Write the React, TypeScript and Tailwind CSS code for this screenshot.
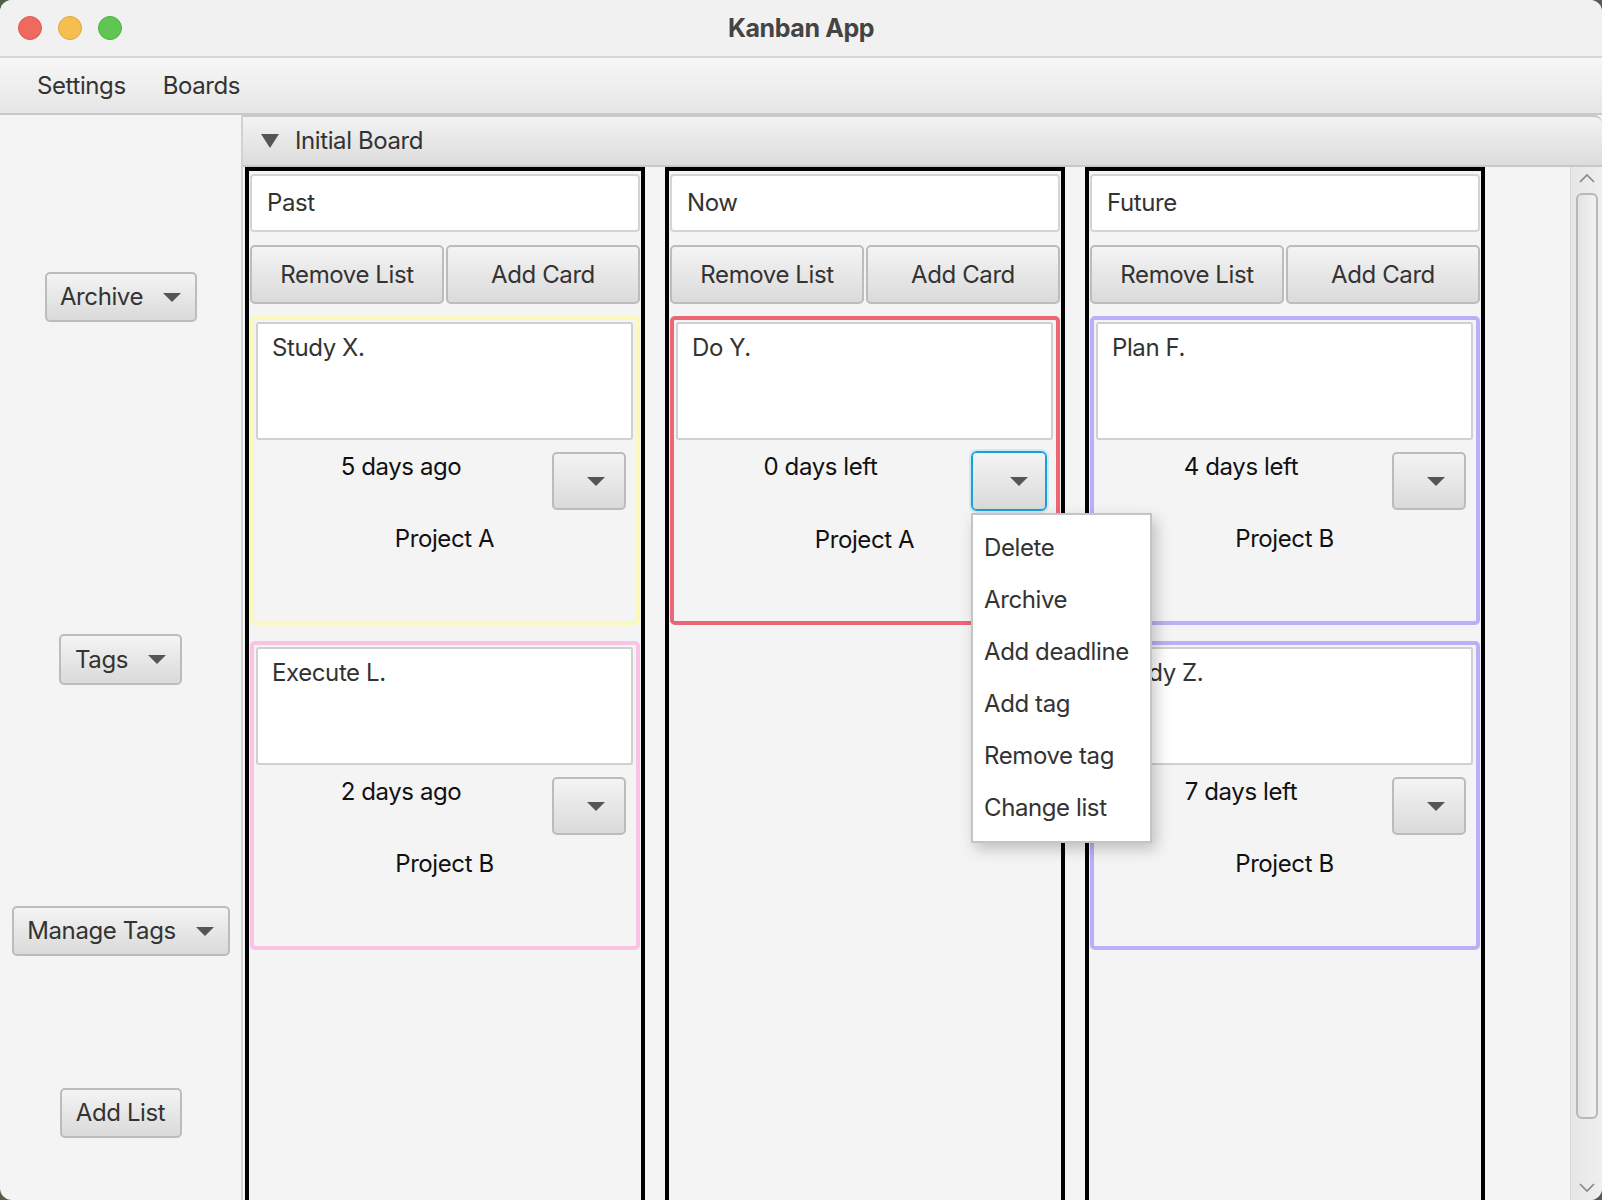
import React from "react";

const font = { fontFamily: "Inter, 'Noto Sans', sans-serif", letterSpacing: "-0.4px" };

function Caret({ className = "" }: { className?: string }) {
  return (
    <svg className={className} width="18" height="9" viewBox="0 0 18 9">
      <polygon points="0,0 18,0 9,9" fill="#555" />
    </svg>
  );
}

function Btn({ children, className = "" }: { children: React.ReactNode; className?: string }) {
  return (
    <div
      className={`flex items-center justify-center rounded-[5px] border-2 border-[#bcbcbc] bg-linear-to-b from-[#f4f4f4] to-[#dadada] text-[24px] text-[#333] ${className}`}
    >
      {children}
    </div>
  );
}

type Card = {
  title: string;
  when: string;
  project: string;
  border: string;
  focused?: boolean;
};

type List = { name: string; cards: Card[] };

const lists: List[] = [
  {
    name: "Past",
    cards: [
      { title: "Study X.", when: "5 days ago", project: "Project A", border: "border-[#fbf9b9]" },
      { title: "Execute L.", when: "2 days ago", project: "Project B", border: "border-[#f9c3e6]" },
    ],
  },
  {
    name: "Now",
    cards: [{ title: "Do Y.", when: "0 days left", project: "Project A", border: "border-[#ec6775]", focused: true }],
  },
  {
    name: "Future",
    cards: [
      { title: "Plan F.", when: "4 days left", project: "Project B", border: "border-[#bbaff6]" },
      { title: "Study Z.", when: "7 days left", project: "Project B", border: "border-[#bbaff6]" },
    ],
  },
];

function CardView({ card }: { card: Card }) {
  return (
    <div className={`h-[309px] rounded-[5px] border-4 ${card.border} p-[2px] pr-[3px]`}>
      <div className="h-[118px] rounded-[3px] border-2 border-[#d0d0d0] bg-white px-[14px] pt-[6px] text-[24px] text-[#333]">
        {card.title}
      </div>
      <div className="mt-[12px] flex items-start pr-[7px]">
        <div className="flex-1 pr-[6px] text-center text-[24px] leading-[30px] text-[#111]">{card.when}</div>
        {card.focused ? (
          <div className="-mr-[1px] -mt-[1px] rounded-[6px] border-2 border-[#1b9fd9] shadow-[0_0_0_2px_#cde8f6]">
            <div className="flex h-[56px] w-[72px] items-center justify-end rounded-[4px] bg-linear-to-b from-[#f4f4f4] to-[#dadada] pr-[17px]">
              <Caret />
            </div>
          </div>
        ) : (
          <Btn className="h-[58px] w-[74px] justify-end pr-[19px]">
            <Caret />
          </Btn>
        )}
      </div>
      <div className="mt-[14px] text-center text-[24px] leading-[30px] text-[#111]">{card.project}</div>
    </div>
  );
}

function ListColumn({ list }: { list: List }) {
  return (
    <div className="flex w-[400px] flex-col border-x-4 border-t-4 border-black px-[1px] pt-[3px]">
      <div className="flex h-[58px] items-center rounded-[4px] border-2 border-[#d4d4d4] bg-white px-[15px] text-[24px] text-[#333]">
        {list.name}
      </div>
      <div className="mt-[13px] flex gap-[2px]">
        <Btn className="h-[59px] flex-1">Remove List</Btn>
        <Btn className="h-[59px] flex-1">Add Card</Btn>
      </div>
      <div className="mt-[12px] flex flex-col gap-[16px]">
        {list.cards.map((c) => (
          <CardView key={c.title} card={c} />
        ))}
      </div>
    </div>
  );
}

export default function App() {
  return (
    <div className="relative h-[1200px] w-[1602px] overflow-hidden bg-[#52604a]" style={font}>
      <div className="flex h-full w-full flex-col overflow-hidden rounded-[12px] bg-[#f4f4f4]">
        {/* Title bar */}
        <div className="relative flex h-[58px] items-center border-b-2 border-[#d6d6d6] bg-[#f1f1f1]">
          <div className="flex gap-[16px] pl-[18px]">
            <span className="h-[24px] w-[24px] rounded-full border border-[#de5a50] bg-[#ee6a5f]" />
            <span className="h-[24px] w-[24px] rounded-full border border-[#dfa63a] bg-[#f5bf4f]" />
            <span className="h-[24px] w-[24px] rounded-full border border-[#4fae3f] bg-[#61c554]" />
          </div>
          <div className="absolute inset-x-0 top-0 flex h-[58px] items-center justify-center text-[25px] font-bold text-[#444]">
            Kanban App
          </div>
        </div>

        {/* Menu bar */}
        <div className="flex h-[57px] items-center gap-[37px] border-b-2 border-[#c9c9c9] bg-linear-to-b from-[#f7f7f7] to-[#e6e6e6] pl-[37px] text-[24px] text-[#333]">
          <span>Settings</span>
          <span>Boards</span>
        </div>

        <div className="flex flex-1">
          {/* Sidebar */}
          <div className="flex w-[243px] flex-col items-center border-r-2 border-[#d2d2d2]">
            <Btn className="mt-[157px] h-[50px] w-[152px] gap-[20px]">
              Archive <Caret />
            </Btn>
            <Btn className="mt-[312px] h-[51px] w-[123px] gap-[20px]">
              Tags <Caret />
            </Btn>
            <Btn className="mt-[221px] h-[50px] w-[218px] gap-[20px]">
              Manage Tags <Caret />
            </Btn>
            <Btn className="mt-[132px] h-[50px] w-[122px]">Add List</Btn>
          </div>

          {/* Board */}
          <div className="flex flex-1 flex-col">
            <div className="flex h-[52px] items-center rounded-tr-[8px] border-y-2 border-[#c8c8c8] bg-linear-to-b from-[#f3f3f3] to-[#dcdcdc] pl-[18px] text-[24px] text-[#333]">
              <svg width="18" height="14" viewBox="0 0 18 14">
                <polygon points="0,0 18,0 9,14" fill="#555" />
              </svg>
              <span className="ml-[16px]">Initial Board</span>
            </div>
            <div className="flex flex-1">
              <div className="flex flex-1 gap-[20px] pl-[2px]">
                {lists.map((l) => (
                  <ListColumn key={l.name} list={l} />
                ))}
              </div>
              {/* Scrollbar */}
              <div className="flex w-[32px] flex-col items-center border-l border-[#d8d8d8] bg-linear-to-r from-[#e6e6e6] to-[#efefef]">
                <svg className="mt-[6px]" width="16" height="10" viewBox="0 0 16 10">
                  <polyline points="1,9 8,2 15,9" fill="none" stroke="#888" strokeWidth="1.6" />
                </svg>
                <div className="mt-[10px] h-[926px] w-[22px] rounded-[6px] border-2 border-[#b8b8b8] bg-linear-to-r from-[#e4e4e4] to-[#f2f2f2]" />
                <svg className="mt-auto mb-[7px]" width="16" height="10" viewBox="0 0 16 10">
                  <polyline points="1,1 8,8 15,1" fill="none" stroke="#888" strokeWidth="1.6" />
                </svg>
              </div>
            </div>
          </div>
        </div>
      </div>

      {/* Context menu */}
      <div className="absolute left-[971px] top-[513px] flex w-[181px] flex-col border-2 border-[#c4c4c4] bg-white py-[7px] text-[24px] text-[#333] shadow-[4px_6px_14px_rgba(0,0,0,0.22)]">
        {["Delete", "Archive", "Add deadline", "Add tag", "Remove tag", "Change list"].map((t) => (
          <div key={t} className="flex h-[52px] items-center pl-[11px]">
            {t}
          </div>
        ))}
      </div>
    </div>
  );
}
